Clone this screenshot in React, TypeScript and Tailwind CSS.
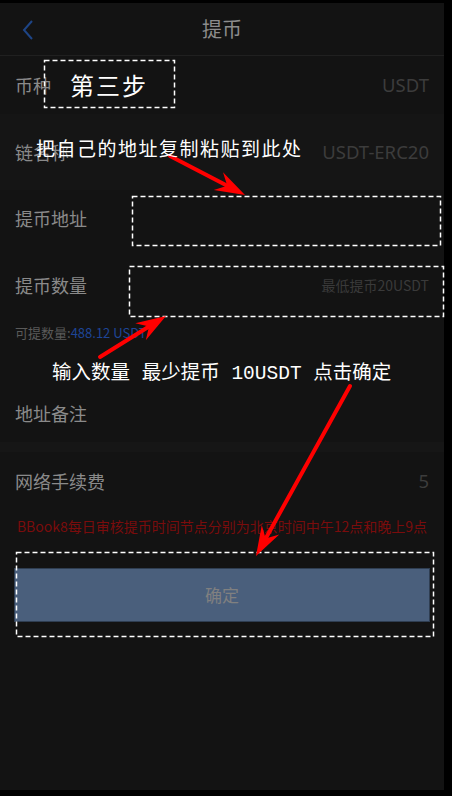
import React from "react";

const cjk = { fontFamily: '"Noto Sans CJK SC", "Noto Sans", sans-serif' };
const latin = { fontFamily: '"Noto Sans", "Noto Sans CJK SC", sans-serif' };
const mono = { fontFamily: '"Liberation Mono", "Noto Sans CJK SC", monospace' };

type Pt = [number, number];

function Arrow({ from, to }: { from: Pt; to: Pt }) {
  const dx = to[0] - from[0];
  const dy = to[1] - from[1];
  const len = Math.hypot(dx, dy);
  const ux = dx / len;
  const uy = dy / len;
  const nx = -uy;
  const ny = ux;
  const headLen = 30;
  const notch = 20;
  const wing = 10;
  const bx = to[0] - ux * headLen;
  const by = to[1] - uy * headLen;
  const cx = to[0] - ux * notch;
  const cy = to[1] - uy * notch;
  const pts = [
    [to[0], to[1]],
    [bx + nx * wing, by + ny * wing],
    [cx, cy],
    [bx - nx * wing, by - ny * wing],
  ]
    .map((p) => p.join(","))
    .join(" ");
  return (
    <g>
      <line x1={from[0]} y1={from[1]} x2={cx} y2={cy} stroke="#ff0000" strokeWidth={4} strokeLinecap="round" />
      <polygon points={pts} fill="#ff0000" />
    </g>
  );
}

function Row({ label, value, h, className = "" }: { label: string; value?: string; h: string; className?: string }) {
  return (
    <div className={`flex items-center justify-between px-[15px] ${h} ${className}`}>
      <span className="text-[18px] text-[#8a8a8a]" style={cjk}>
        {label}
      </span>
      {value && (
        <span className="text-[18.5px] text-[#3c3c3c]" style={latin}>
          {value}
        </span>
      )}
    </div>
  );
}

export default function App() {
  return (
    <div className="w-[452px] h-[796px] bg-black overflow-hidden">
      <div className="relative mt-[3px] w-[444px] h-[787px] bg-[#131313] flex flex-col">
        {/* header */}
        <div className="h-[53px] border-b border-[#202020] flex items-center relative shrink-0">
          <svg className="absolute left-[21px] top-[16px]" width="14" height="22" viewBox="0 0 14 22">
            <polyline points="11,2 3,11 11,20" fill="none" stroke="#1e4586" strokeWidth="2" />
          </svg>
          <div className="w-full text-center text-[20px] text-[#8c8c8c]" style={cjk}>
            提币
          </div>
        </div>

        <Row label="币种" value="USDT" h="h-[58px]" />
        <Row label="链名称" value="USDT-ERC20" h="h-[76px]" className="bg-[#151515]" />
        <Row label="提币地址" h="h-[56px]" />
        <div className="flex items-center justify-between px-[15px] h-[78px]">
          <span className="text-[18px] text-[#8a8a8a]" style={cjk}>
            提币数量
          </span>
          <span className="text-[14px] text-[#3a3a3a]" style={cjk}>
            最低提币20USDT
          </span>
        </div>
        <div className="h-[18px] flex items-center px-[15px] text-[13px]" style={cjk}>
          <span className="text-[#5a5a5a]">可提数量:</span>
          <span className="text-[#1e4596]">488.12 USDT</span>
        </div>
        <div className="h-[42px]" />
        <Row label="地址备注" h="h-[58px]" />
        <div className="h-[10px] bg-[#161616]" />
        <Row label="网络手续费" value="5" h="h-[58px]" />
        <div className="mt-[6px] h-[20px] flex items-center justify-center text-[14px] text-[#7a0c0c]" style={cjk}>
          BBook8每日审核提币时间节点分别为北京时间中午12点和晚上9点
        </div>
        <div className="mt-[32px] mx-[14px] h-[54px] bg-[#4a5f7c] border border-[#2f3e52] flex items-center justify-center">
          <span className="text-[17px] text-[#808080]" style={cjk}>
            确定
          </span>
        </div>

        {/* annotations overlay */}
        <svg className="absolute left-0 top-[-3px] pointer-events-none" width="452" height="796">
          <g fill="none" stroke="#ffffff" strokeWidth="1.5" strokeDasharray="5 3">
            <rect x="44.5" y="60.5" width="130" height="47" />
            <rect x="132.5" y="196.5" width="308" height="49" />
            <rect x="129.5" y="266.5" width="314" height="50" />
            <rect x="16.5" y="552.5" width="417" height="84" />
          </g>
          <Arrow from={[170, 156]} to={[245, 195]} />
          <Arrow from={[100, 357]} to={[166, 316]} />
          <Arrow from={[350, 386]} to={[256, 556]} />
        </svg>
        <div className="absolute left-[70px] top-[67px] text-[24px] leading-[30px] tracking-[2px] text-white" style={cjk}>
          第三步
        </div>
        <div className="absolute left-[36px] top-[131px] text-[19px] leading-[28px] tracking-[1.5px] text-white" style={cjk}>
          把自己的地址复制粘贴到此处
        </div>
        <div className="absolute left-[52px] top-[357px] text-[19.5px] leading-[28px] text-white whitespace-pre" style={mono}>
          输入数量 最少提币 10USDT 点击确定
        </div>
      </div>
    </div>
  );
}
